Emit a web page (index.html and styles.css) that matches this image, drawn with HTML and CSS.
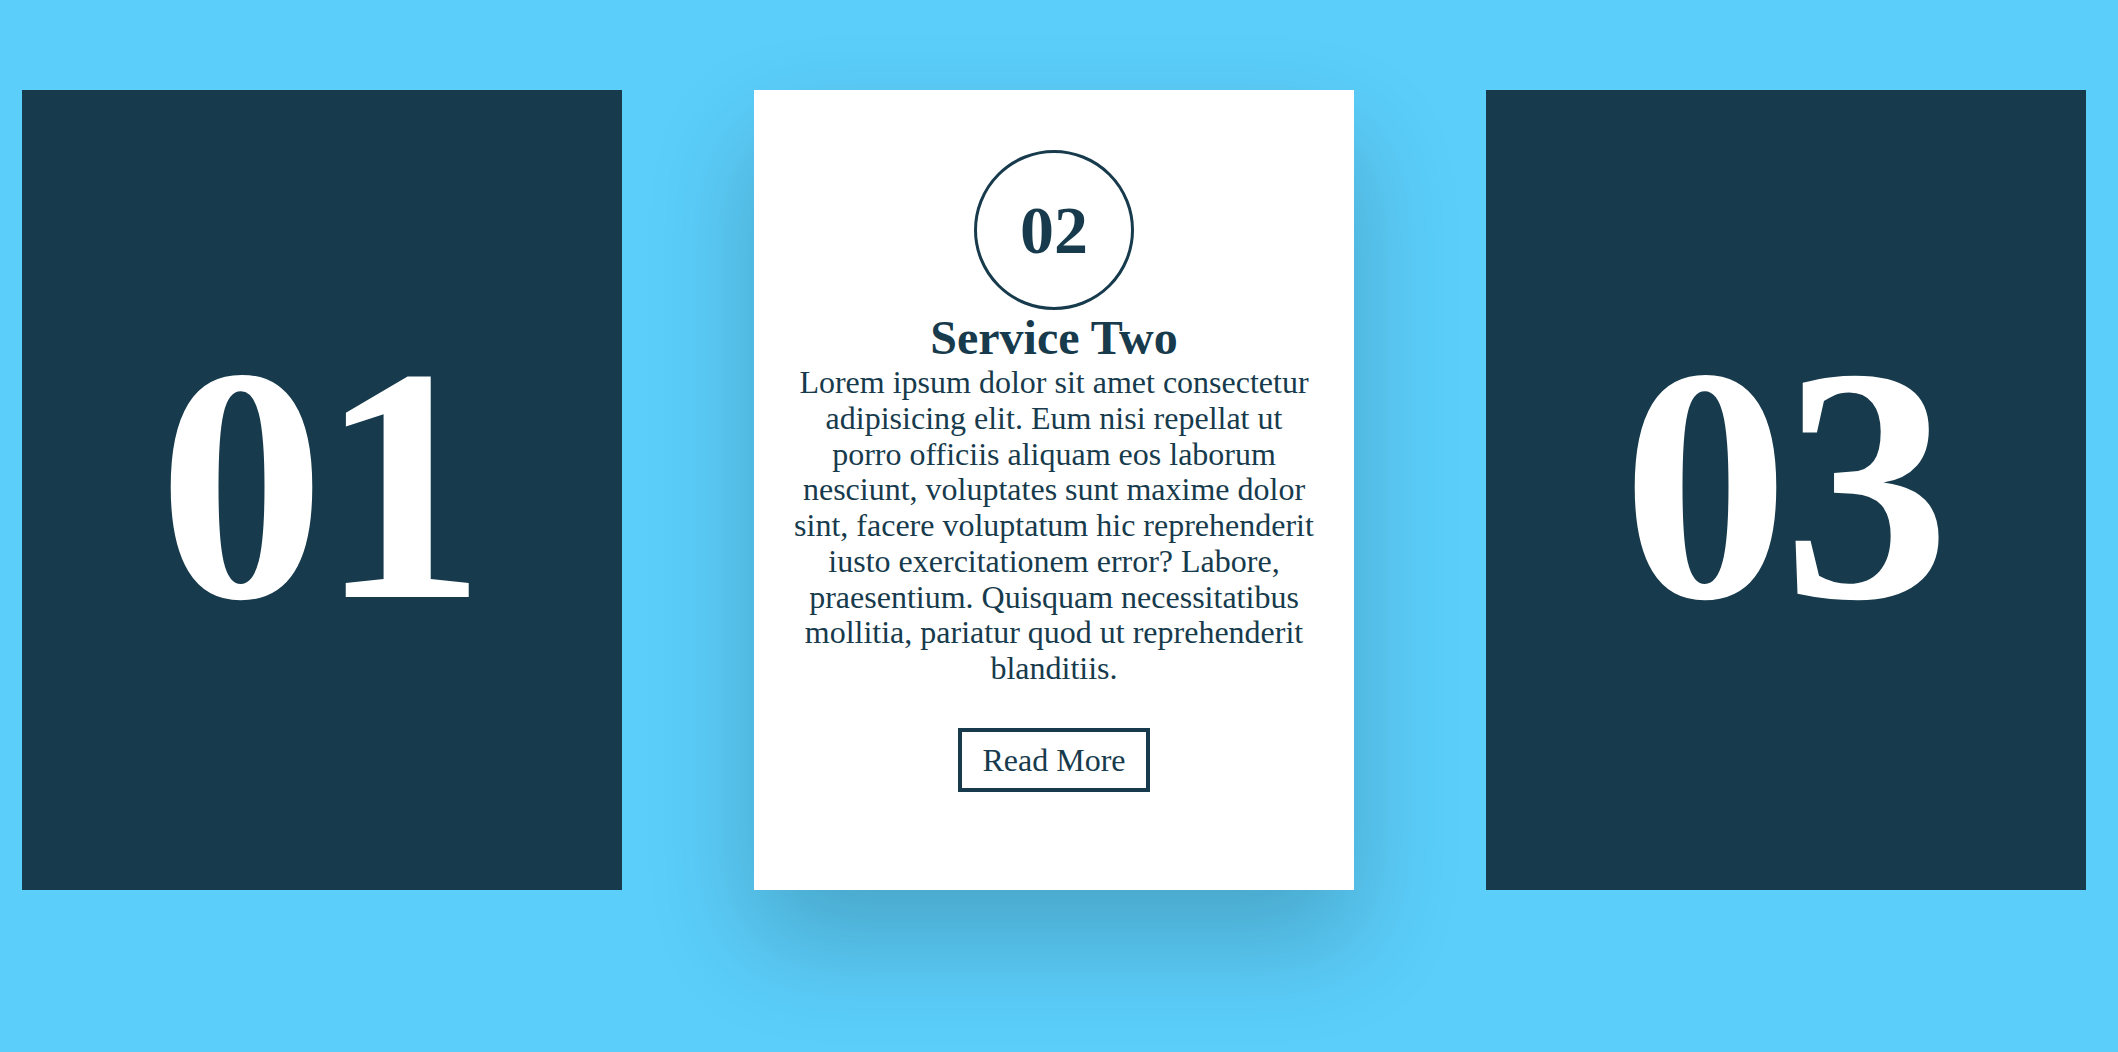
FILE: index.html
```html
<!DOCTYPE html>
<html lang="en">
<head>
<meta charset="utf-8">
<title>Services</title>
<link rel="stylesheet" href="styles.css">
</head>
<body>
<main class="services">
  <section class="card card-dark">
    <h2 class="big-number">01</h2>
  </section>
  <section class="card card-light">
    <div class="circle"><span class="circle-num">02</span></div>
    <h3 class="card-title">Service Two</h3>
    <p class="card-text">Lorem ipsum dolor sit amet consectetur adipisicing elit. Eum nisi repellat ut porro officiis aliquam eos laborum nesciunt, voluptates sunt maxime dolor sint, facere voluptatum hic reprehenderit iusto exercitationem error? Labore, praesentium. Quisquam necessitatibus mollitia, pariatur quod ut reprehenderit blanditiis.</p>
    <a class="btn" href="#">Read More</a>
  </section>
  <section class="card card-dark">
    <h2 class="big-number">03</h2>
  </section>
</main>
</body>
</html>
```

FILE: styles.css
```css
* {
  box-sizing: border-box;
}

html, body {
  margin: 0;
  padding: 0;
  height: 100%;
  background: #5bcefa;
  overflow: hidden;
}

body {
  font-family: "Liberation Serif", "Times New Roman", Times, serif;
  color: #173b4c;
}

.services {
  display: flex;
  align-items: flex-start;
  gap: 132px;
  padding: 90px 32px 0 22px;
}

.card {
  width: 600px;
  height: 800px;
  flex: 0 0 600px;
}

.card-dark {
  background: #173b4c;
  display: flex;
  align-items: center;
  justify-content: center;
  padding-bottom: 12px;
}

.big-number {
  margin: 0;
  color: #ffffff;
  font-size: 334px;
  font-weight: 700;
  line-height: 1;
  letter-spacing: -6px;
  text-indent: -6px;
}

.card-light {
  background: #ffffff;
  display: flex;
  flex-direction: column;
  align-items: center;
  padding: 60px 37px 0;
  text-align: center;
  box-shadow: 0 50px 100px rgba(0, 0, 0, 0.2);
}

.circle {
  width: 160px;
  height: 160px;
  border: 3px solid #173b4c;
  border-radius: 50%;
  display: flex;
  align-items: center;
  justify-content: center;
  flex: 0 0 auto;
}

.circle-num {
  font-size: 68px;
  font-weight: 700;
}

.card-title {
  margin: 0;
  font-size: 48px;
  font-weight: 700;
}

.card-text {
  margin: 0;
  font-size: 32px;
  line-height: 35.75px;
}

.btn {
  margin-top: 41px;
  display: inline-block;
  font-size: 32px;
  line-height: 36px;
  padding: 10px 20px;
  border: 4px solid #173b4c;
  color: #173b4c;
  text-decoration: none;
  background: transparent;
}
```
